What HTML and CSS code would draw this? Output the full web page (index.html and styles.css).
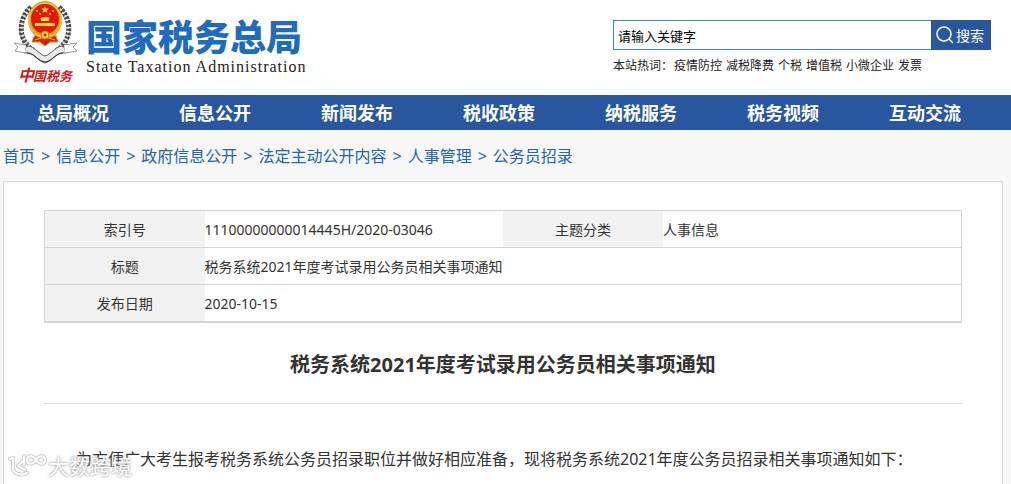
FILE: index.html
```html
<!DOCTYPE html>
<html lang="zh-CN">
<head>
  <meta charset="utf-8">
  <title>税务系统2021年度考试录用公务员相关事项通知</title>
  <link rel="stylesheet" href="styles.css">
</head>
<body>
  <header class="header">
    <a class="logo" href="#">
      <svg class="emblem" width="73" height="88" viewBox="0 0 73 88">
        <!-- 麦穗 -->
        <g fill="none" stroke="#4a4a48" stroke-width="5" stroke-dasharray="3 1">
          <path d="M18 7C4 20 5 41 21 51"/>
          <path d="M46 7C60 20 59 41 43 51"/>
        </g>
        <g fill="none" stroke="#e4e4e0" stroke-width="2" stroke-dasharray="2 2">
          <path d="M17 9C5 21 6 40 20 49"/>
          <path d="M47 9C59 21 58 40 44 49"/>
        </g>
        <!-- 绶带 -->
        <path d="M13 47C19 43 25 54 32 56C39 54 45 43 51 47L53 53C44 51 40 61 32 63C24 61 20 51 11 53Z" fill="#e9e9e7" stroke="#555" stroke-width="1"/>
        <path d="M13 45L1 43L5 47L2 51L12 53M51 45L64 43L60 47L64 51L52 53" fill="#fff" stroke="#999" stroke-width="1"/>
        <path d="M14 53C22 53 24 61 32 62C40 61 42 53 50 53" fill="none" stroke="#333" stroke-width="1"/>
        <!-- 国徽 -->
        <path d="M22 34H42L45 42L37 42L32 46L27 42L19 42Z" fill="#d51d13" stroke="#c59519"/>
        <ellipse cx="32" cy="20" rx="17" ry="19" fill="#d9a51e"/>
        <ellipse cx="32" cy="20" rx="16" ry="17" fill="none" stroke="#f7d352" stroke-width="1"/>
        <ellipse cx="32" cy="19" rx="14" ry="15" fill="#e5160c"/>
        <path d="M32 6l1 2.6h2.8l-2.2 1.7.8 2.7-2.4-1.6-2.4 1.6.8-2.7-2.2-1.7h2.8z" fill="#ffdd37"/>
        <g fill="#ffdd37">
          <circle cx="24" cy="11" r="1"/>
          <circle cx="27" cy="14" r="1"/>
          <circle cx="37" cy="14" r="1"/>
          <circle cx="40" cy="11" r="1"/>
          <path d="M27 19l2-2h6l2 2zM28 19h8v2h-8zM22 23h20v3H22z"/>
        </g>
        <circle cx="32" cy="35" r="4" fill="#ffd748" stroke="#b77c13"/>
        <circle cx="32" cy="35" r="1.5" fill="#d51d13"/>
        <path d="M20 36L27 35M44 36L37 35M22 40L28 38M42 40L36 38" stroke="#f3bd29"/>
        <g class="emblem-text">
          <text x="5" y="81" font-size="16">中</text>
          <text x="20" y="81" font-size="13">国</text>
          <text x="33" y="81" font-size="13">税</text>
          <text x="46" y="81" font-size="13">务</text>
        </g>
      </svg>
      <span class="site-name">
        <span class="name-cn">国家税务总局</span>
        <span class="name-en">State Taxation Administration</span>
      </span>
    </a>
    <div class="search">
      <form class="search-form">
        <input type="text" class="search-input" aria-label="请输入关键字" value="请输入关键字">
        <button type="button" class="search-btn">
          <svg width="18" height="18" viewBox="0 0 18 18" fill="none" stroke="#fff" stroke-width="1.5">
            <circle cx="8" cy="8" r="7"/>
            <path d="M13 13L17 17"/>
          </svg>
          搜索
        </button>
      </form>
      <div class="hot">
        <span class="hot-title">本站热词&#65306;</span>
        <a href="#">疫情防控</a>
        <a href="#">减税降费</a>
        <a href="#">个税</a>
        <a href="#">增值税</a>
        <a href="#">小微企业</a>
        <a href="#">发票</a>
      </div>
    </div>
  </header>

  <nav class="nav">
    <a href="#">总局概况</a>
    <a href="#">信息公开</a>
    <a href="#">新闻发布</a>
    <a href="#">税收政策</a>
    <a href="#">纳税服务</a>
    <a href="#">税务视频</a>
    <a href="#">互动交流</a>
  </nav>

  <div class="crumbs">
    <a href="#">首页</a>
    <span>&gt;</span>
    <a href="#">信息公开</a>
    <span>&gt;</span>
    <a href="#">政府信息公开</a>
    <span>&gt;</span>
    <a href="#">法定主动公开内容</a>
    <span>&gt;</span>
    <a href="#">人事管理</a>
    <span>&gt;</span>
    <a href="#">公务员招录</a>
  </div>

  <main class="content">
    <table class="info">
      <colgroup>
        <col class="col-label">
        <col>
        <col class="col-label">
        <col>
      </colgroup>
      <tr>
        <th>索引号</th>
        <td>11100000000014445H/2020-03046</td>
        <th>主题分类</th>
        <td>人事信息</td>
      </tr>
      <tr>
        <th>标题</th>
        <td colspan="3">税务系统2021年度考试录用公务员相关事项通知</td>
      </tr>
      <tr>
        <th>发布日期</th>
        <td colspan="3">2020-10-15</td>
      </tr>
    </table>
    <h1 class="title">税务系统2021年度考试录用公务员相关事项通知</h1>
    <div class="article">
      <p>为方便广大考生报考税务系统公务员招录职位并做好相应准备&#65292;现将税务系统2021年度公务员招录相关事项通知如下&#65306;</p>
    </div>
    <!-- 水印 -->
    <div class="watermark">
      <svg width="40" height="26" viewBox="0 0 40 26" fill="none" stroke-linecap="round" stroke-linejoin="round">
        <g class="mark-shade">
          <path d="M2 6L5 5V16C6 21 13 23 19 20M15 8L10 13L17 17"/>
          <path d="M16 3V11M28 7C25 2 19 2 19 7S25 12 28 7S37 2 37 7S31 12 28 7"/>
        </g>
        <g class="mark-line">
          <path d="M2 6L5 5V16C6 21 13 23 19 20M15 8L10 13L17 17"/>
          <path d="M16 3V11M28 7C25 2 19 2 19 7S25 12 28 7S37 2 37 7S31 12 28 7"/>
        </g>
      </svg>
      <span>大数跨境</span>
    </div>
  </main>
</body>
</html>
```
FILE: styles.css
```css
body {
  margin: 0;
  background: #f7f7f7;
  color: #333;
  font-family: "Noto Sans", "Noto Sans CJK SC", sans-serif;
  font-size: 14px;
}
a {
  color: inherit;
  text-decoration: none;
}

/* 页头 */
.header {
  display: flex;
  justify-content: space-between;
  height: 95px;
  padding: 0 20px 0 13px;
  background: #fff;
}
.logo {
  display: flex;
}
.emblem-text {
  fill: #d3171b;
  font-family: "Noto Sans CJK SC", sans-serif;
  font-style: italic;
  font-weight: bold;
}
.site-name {
  display: flex;
  flex-direction: column;
  padding-top: 17px;
}
.name-cn {
  color: #1f6bbd;
  font-family: "Noto Sans CJK SC", sans-serif;
  font-size: 36px;
  font-weight: 900;
  line-height: 36px;
}
.name-en {
  padding-top: 5px;
  color: #222;
  font-family: "Liberation Serif", serif;
  font-size: 16px;
  line-height: 18px;
  letter-spacing: 1px;
}
.search {
  width: 378px;
  padding-top: 20px;
}
.search-form {
  display: flex;
  height: 30px;
}
.search-input {
  flex: 1;
  min-width: 0;
  box-sizing: border-box;
  padding: 0 4px;
  border: 1px solid #3a87bd;
  border-right: none;
  color: #000;
  font-family: inherit;
  font-size: 13px;
}
.search-btn {
  display: flex;
  align-items: center;
  justify-content: center;
  gap: 2px;
  width: 60px;
  padding: 0 2px 0 0;
  border: none;
  background: #2857a0;
  color: #fff;
  font-family: inherit;
  font-size: 14px;
}
.hot {
  display: flex;
  gap: 4px;
  padding-top: 5px;
  color: #222;
  font-family: "Noto Sans CJK SC", sans-serif;
  font-size: 12px;
  line-height: 20px;
}
.hot-title {
  width: 57px;
  white-space: nowrap;
}

/* 导航 */
.nav {
  display: flex;
  padding: 1px 15px 0 2px;
  background: #2857a0;
}
.nav a {
  flex: 1;
  color: #fff;
  font-size: 18px;
  font-weight: bold;
  line-height: 34px;
  text-align: center;
}

/* 当前位置 */
.crumbs {
  display: flex;
  gap: 6px;
  padding: 2px 3px 0;
  color: #2264af;
  font-size: 16px;
  line-height: 49px;
}

/* 正文 */
.content {
  position: relative;
  margin: 0 8px 0 3px;
  padding: 28px 40px 0;
  border: 1px solid #d9d9d9;
  border-bottom: none;
  background: #fff;
}
.info {
  width: 100%;
  table-layout: fixed;
  border-collapse: collapse;
  border: 1px solid #d6d6d6;
  border-bottom-width: 2px;
}
.col-label {
  width: 160px;
}
.info th,
.info td {
  height: 35px;
  padding: 1px 0 0;
  font-weight: normal;
  line-height: 20px;
  text-align: left;
}
.info tr {
  border-bottom: 1px solid #d6d6d6;
}
.info th {
  background: #f2f2f2;
  text-align: center;
}
.title {
  margin: 0;
  padding: 27px 0 23px;
  border-bottom: 1px solid #dcdad8;
  font-size: 20px;
  line-height: 30px;
  text-align: center;
}
.article {
  padding: 40px 0 10px;
  font-size: 16px;
  line-height: 30px;
}
.article p {
  margin: 0;
  text-indent: 2em;
}

/* 水印 */
.watermark {
  position: absolute;
  left: 4px;
  top: 269px;
  display: flex;
  align-items: center;
  color: #fff;
  font-size: 21px;
  line-height: 30px;
  text-shadow: 0 0 2px #aaa, 0 0 3px #aaa;
}
.mark-shade {
  stroke: #ccc;
  stroke-width: 4;
}
.mark-line {
  stroke: #fff;
  stroke-width: 2;
}
```
